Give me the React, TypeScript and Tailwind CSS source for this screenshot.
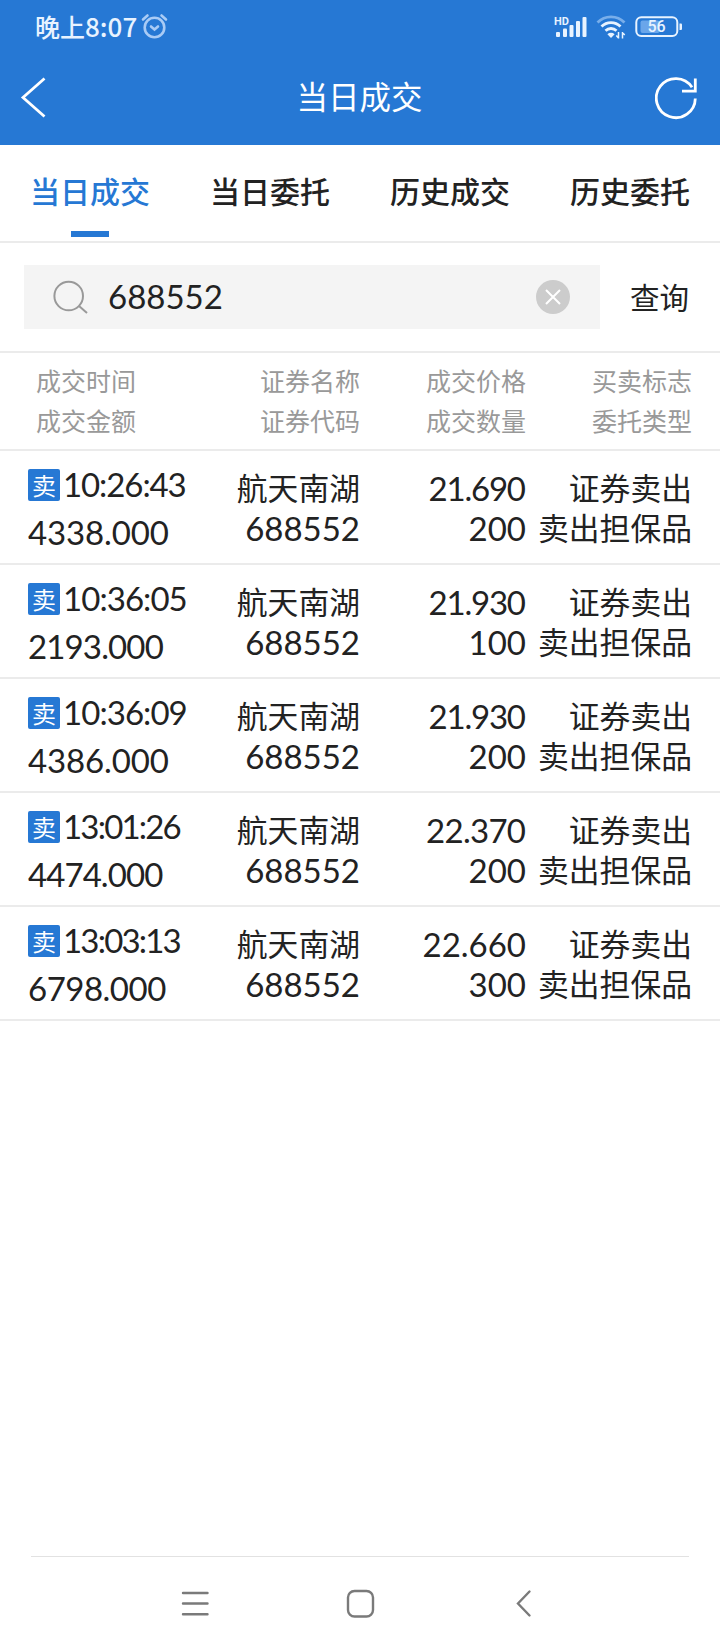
import type { ReactNode } from "react";

type Trade = {
  time: string;
  amount: string;
  name: string;
  code: string;
  price: string;
  qty: string;
  side: string;
  kind: string;
};

const TABS = ["当日成交", "当日委托", "历史成交", "历史委托"];

const COLUMNS = [
  ["成交时间", "成交金额"],
  ["证券名称", "证券代码"],
  ["成交价格", "成交数量"],
  ["买卖标志", "委托类型"],
];

const common = { name: "航天南湖", code: "688552", side: "证券卖出", kind: "卖出担保品" };

const TRADES: Trade[] = [
  { ...common, time: "10:26:43", amount: "4338.000", price: "21.690", qty: "200" },
  { ...common, time: "10:36:05", amount: "2193.000", price: "21.930", qty: "100" },
  { ...common, time: "10:36:09", amount: "4386.000", price: "21.930", qty: "200" },
  { ...common, time: "13:01:26", amount: "4474.000", price: "22.370", qty: "200" },
  { ...common, time: "13:03:13", amount: "6798.000", price: "22.660", qty: "300" },
];

// Lato's figures are tabular. This is how much (px) each narrow one should
// give back; the sum is spread over the whole string as letter spacing.
const SLACK: Record<string, number> = { "1": 6, "7": 3.5, "4": 1, ":": 0.3 };

function Num({ children }: { children: string }) {
  const slack = children.split("").reduce((sum, ch) => sum + (SLACK[ch] ?? 0), 0);
  // short quantities keep their natural width
  const gap = children.length > 3 ? slack / (children.length - 1) : 0;
  return (
    <span
      className="block font-['Lato','Noto_Sans_CJK_SC',sans-serif] text-[33px]"
      style={{ letterSpacing: -gap, marginRight: gap }}
    >
      {children}
    </span>
  );
}

function StatusBar() {
  return (
    <div className="flex h-[52px] items-center pl-[35px] pr-[37px] text-[#e8f3ff]">
      <span className="pb-px text-[25px] font-medium leading-[52px]">
        晚上<span className="text-[26px]">8:07</span>
      </span>
      <svg className="ml-[3px] h-[26px] w-[28px]" viewBox="0 0 28 26" fill="none" stroke="#a9cbf5" strokeWidth="2.6" strokeLinecap="round">
        <circle cx="14.5" cy="14.5" r="9.8" />
        <path d="M3 6.5 7.5 2.5M26 6.5 21.5 2.5M11 13.5l3.5 3 3.5-3" />
      </svg>
      <svg className="ml-auto h-[26px] w-[34px]" viewBox="0 0 34 26" fill="currentColor">
        <text x="0" y="11.5" fontSize="11" fontWeight="700" fontFamily="Roboto, sans-serif">
          HD
        </text>
        <rect x="2" y="19" width="4" height="5" rx="1" />
        <rect x="9" y="15.5" width="4" height="8.5" rx="1" />
        <rect x="15.5" y="12" width="4" height="12" rx="1" />
        <rect x="22" y="8" width="4" height="16" rx="1" />
        <rect x="28.5" y="4" width="4" height="20" rx="1" />
      </svg>
      <svg className="ml-2 h-[26px] w-[31px]" viewBox="0 0 31 26" fill="none" stroke="currentColor" strokeWidth="2.8">
        <path d="M1.5 9.5a19 19 0 0 1 27 0" stroke="#78aeea" />
        <path d="M5.5 13.6a13.5 13.5 0 0 1 19 0M9.5 17.7a8 8 0 0 1 11 0" />
        <path d="M15 25l-3.6-3.8a5.2 5.2 0 0 1 7.2 0z" fill="currentColor" stroke="none" />
        <path d="M22.5 19v6.5M26.5 25.5V19M22.5 25l-2.2-2.5M26.5 19.5l2.2 2.5" strokeWidth="1.5" />
      </svg>
      <svg className="ml-2 mt-[2px] h-[22px] w-[48px]" viewBox="0 0 48 22">
        <rect x="1.3" y="1.3" width="41" height="18.8" rx="5" fill="none" stroke="currentColor" strokeWidth="2" />
        <rect x="5.5" y="4.5" width="19" height="12.5" rx="2" fill="#6aa6ea" />
        <path d="M44.5 7.5h1.5q1 0 1 1.2v4q0 1.200-1 1.200h-1.500z" fill="currentColor" />
        <text x="21.500" y="16.300" textAnchor="middle" fontSize="16" fontWeight="500" fontFamily="Roboto, sans-serif" fill="currentColor">
          56
        </text>
      </svg>
    </div>
  );
}

function TitleBar() {
  return (
    <div className="flex h-[93px] items-center justify-between pb-[2px] pl-[20px] pr-[21px] text-white">
      <svg className="h-[42px] w-[44px]" viewBox="0 0 44 42" fill="none" stroke="currentColor" strokeWidth="2.8">
        <path d="M24.5 1.500 3 20.500l21.500 19" />
      </svg>
      <h1 className="pb-[5px] text-[31.5px] leading-[44px]">当日成交</h1>
      <svg className="h-[44px] w-[44px]" viewBox="0 0 44 44" fill="none" stroke="currentColor" strokeWidth="2.8">
        <path d="M40.3 22.500a19.500 19.500 0 1 1-3.300-11.200M40.300 2.500v12.700H27" />
      </svg>
    </div>
  );
}

function Stack({ children }: { children: ReactNode }) {
  return <div className="flex flex-col items-end whitespace-nowrap pt-4 leading-[40px]">{children}</div>;
}

function TradeRow({ trade }: { trade: Trade }) {
  return (
    <li className="grid h-[114px] grid-cols-[160px_172px_166px_166px] border-b-2 border-[#ebebeb] px-7 text-[30.8px]">
      <div className="flex flex-col whitespace-nowrap pt-[9px] leading-[48px]">
        <div className="flex h-[48px] items-center">
          <span className="mr-[3px] mt-[2px] flex size-8 shrink-0 items-center justify-center rounded-[2px] bg-[#2678d4] pb-px text-[24px] leading-none text-white">
            卖
          </span>
          <Num>{trade.time}</Num>
        </div>
        <Num>{trade.amount}</Num>
      </div>
      <Stack>
        <span>{trade.name}</span>
        <span className="pt-px">
          <Num>{trade.code}</Num>
        </span>
      </Stack>
      <div className="pt-px">
        <Stack>
          <Num>{trade.price}</Num>
          <Num>{trade.qty}</Num>
        </Stack>
      </div>
      <Stack>
        <span>{trade.side}</span>
        <span>{trade.kind}</span>
      </Stack>
    </li>
  );
}

export default function App() {
  return (
    <div className="flex h-[1650px] w-[720px] flex-col overflow-hidden bg-white font-['Noto_Sans_CJK_SC',sans-serif] text-[#222]">
      <header className="h-[145px] bg-[#2678d4]">
        <StatusBar />
        <TitleBar />
      </header>

      <nav className="grid h-[98px] grid-cols-4 border-b-2 border-[#ebebeb]">
        {TABS.map((tab, i) => (
          <button key={tab} className={i === 0 ? "flex flex-col items-center text-[#2678d4]" : "flex flex-col items-center"}>
            <span className="h-[86px] text-[30px] font-medium leading-[91px]">{tab}</span>
            {i === 0 && <span className="h-[6px] w-[38px] bg-[#2678d4]" />}
          </button>
        ))}
      </nav>

      <div className="flex h-[110px] items-center border-b-2 border-[#ebebeb] pl-6">
        <div className="flex h-16 w-[576px] items-center bg-[#f4f4f4] pl-[29px] pr-[30px]">
          <svg className="mr-[19px] size-[36px]" viewBox="0 0 36 36" fill="none" stroke="#999" strokeWidth="2">
            <circle cx="15.7" cy="17" r="14.3" />
            <path d="M26 27l8 7" />
          </svg>
          <Num>688552</Num>
          <svg className="ml-auto size-[34px]" viewBox="0 0 34 34">
            <circle cx="17" cy="17" r="17" fill="#ccc" />
            <path d="M10 10l14 14M24 10 10 24" stroke="#fff" strokeWidth="2" />
          </svg>
        </div>
        <button className="ml-[30px] pb-[2px] text-[29.5px] leading-[62px]">查询</button>
      </div>

      <div className="grid h-[98px] grid-cols-[160px_172px_166px_166px] border-b-2 border-[#ebebeb] px-7 pt-[7px] text-[25px] leading-[40px] text-[#999]">
        {COLUMNS.map(([top, bottom], i) => (
          <div key={top} className={i === 0 ? "pl-2" : "text-right"}>
            <div>{top}</div>
            <div>{bottom}</div>
          </div>
        ))}
      </div>

      <ul>
        {TRADES.map((trade) => (
          <TradeRow key={trade.time} trade={trade} />
        ))}
      </ul>

      <footer className="mx-[31px] mt-auto h-[94px] border-t border-[#e2e2e2]">
        <svg className="h-[93px] w-[658px]" viewBox="0 0 658 93" fill="none" stroke="#7a7a7a" strokeWidth="2.4" strokeLinecap="round">
          <path d="M152 36h24.5M152 46.5h24.5M152 57.2h24.5" />
          <rect x="317" y="34" width="25" height="25.5" rx="6.5" />
          <path d="M498.5 34.5 487 46.5l11.5 12" />
        </svg>
      </footer>
    </div>
  );
}
